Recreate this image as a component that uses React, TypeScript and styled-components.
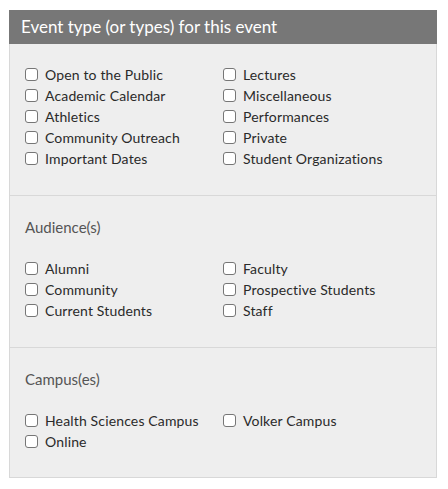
import React from "react";
import styled, { createGlobalStyle } from "styled-components";

const Global = createGlobalStyle`
  html, body { margin: 0; padding: 0; background: #ffffff; }
  body { font-family: Lato, "Open Sans", sans-serif; }
`;

const Page = styled.div`
  padding: 10px 0 0 9px;
`;

const Panel = styled.div`
  width: 428px;
`;

const Header = styled.div`
  height: 34px;
  background: #777777;
  color: #ffffff;
  font-size: 17px;
  line-height: 34px;
  padding-left: 12px;
`;

const Body = styled.div`
  background: #eeeeee;
  border: 1px solid #d8d8d8;
  border-top: none;
`;

const Section = styled.div<{ $first?: boolean; $last?: boolean }>`
  padding: ${(p) => (p.$first ? "20px" : "21px")} 15px ${(p) => (p.$last ? "25px" : "26px")} 15px;
  border-top: ${(p) => (p.$first ? "none" : "1px solid #d8d8d8")};
`;

const SectionTitle = styled.div`
  font-size: 15px;
  line-height: 20px;
  color: #555555;
  margin-bottom: 21px;
`;

const Grid = styled.div`
  display: grid;
  grid-template-columns: 198px 198px;
  grid-auto-flow: column;
`;

const Option = styled.label`
  display: flex;
  align-items: center;
  gap: 7px;
  height: 21px;
  font-size: 14px;
  letter-spacing: 0.15px;
  color: #2a2a2a;
  cursor: pointer;
  white-space: nowrap;
`;

const Box = styled.span`
  box-sizing: border-box;
  width: 13px;
  height: 13px;
  border: 1px solid #767676;
  border-radius: 3px;
  background: #ffffff;
  flex: none;
`;

type Group = { title?: string; rows: number; items: string[] };

const groups: Group[] = [
  {
    rows: 5,
    items: [
      "Open to the Public",
      "Academic Calendar",
      "Athletics",
      "Community Outreach",
      "Important Dates",
      "Lectures",
      "Miscellaneous",
      "Performances",
      "Private",
      "Student Organizations",
    ],
  },
  {
    title: "Audience(s)",
    rows: 3,
    items: ["Alumni", "Community", "Current Students", "Faculty", "Prospective Students", "Staff"],
  },
  {
    title: "Campus(es)",
    rows: 2,
    items: ["Health Sciences Campus", "Online", "Volker Campus"],
  },
];

export default function App() {
  return (
    <Page>
      <Global />
      <Panel>
        <Header>Event type (or types) for this event</Header>
        <Body>
          {groups.map((g, i) => (
            <Section key={i} $first={i === 0} $last={i === groups.length - 1}>
              {g.title && <SectionTitle>{g.title}</SectionTitle>}
              <Grid style={{ gridTemplateRows: `repeat(${g.rows}, 21px)` }}>
                {g.items.map((it) => (
                  <Option key={it}>
                    <Box />
                    {it}
                  </Option>
                ))}
              </Grid>
            </Section>
          ))}
        </Body>
      </Panel>
    </Page>
  );
}
